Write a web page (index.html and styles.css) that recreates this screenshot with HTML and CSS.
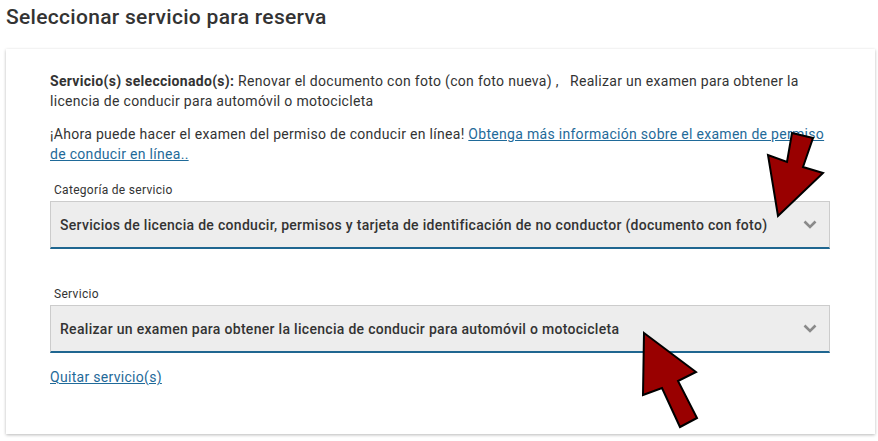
FILE: index.html
```html
<!DOCTYPE html>
<html lang="es">
<head>
    <meta charset="UTF-8">
    <meta name="viewport" content="width=device-width, initial-scale=1.0">
    <title>Seleccionar servicio para reserva</title>
    <link rel="stylesheet" href="styles.css">
</head>
<body>
    <div class="page">
        <h1 class="page-title">Seleccionar servicio para reserva</h1>

        <div class="card">
            <p class="selected">
                <strong>Servicio(s) seleccionado(s):</strong> Renovar el documento con foto (con foto nueva) ,&nbsp;&nbsp; Realizar un examen para obtener la licencia de conducir para automóvil o motocicleta
            </p>
            <p class="notice">
                ¡Ahora puede hacer el examen del permiso de conducir en línea! <a href="#">Obtenga más información sobre el examen de permiso de conducir en línea..</a>
            </p>

            <div class="field">
                <label class="field-label">Categoría de servicio</label>
                <div class="select">
                    <span>Servicios de licencia de conducir, permisos y tarjeta de identificación de no conductor (documento con foto)</span>
                    <svg class="chevron" width="14" height="9" viewBox="0 0 14 9"><path d="M1.5 1.5 L7 7 L12.5 1.5" fill="none" stroke="#8a8a8a" stroke-width="2.6"/></svg>
                </div>
            </div>

            <div class="field second">
                <label class="field-label">Servicio</label>
                <div class="select">
                    <span>Realizar un examen para obtener la licencia de conducir para automóvil o motocicleta</span>
                    <svg class="chevron" width="14" height="9" viewBox="0 0 14 9"><path d="M1.5 1.5 L7 7 L12.5 1.5" fill="none" stroke="#8a8a8a" stroke-width="2.6"/></svg>
                </div>
            </div>

            <a class="remove" href="#">Quitar servicio(s)</a>
        </div>

        <!-- annotation arrows drawn over the screenshot -->
        <svg class="arrows" width="878" height="441" viewBox="0 0 878 441">
            <polygon points="792,133 813,138 803,167 823,173 778,216 768,155 787,162" />
            <polygon points="644,333 696,372 678,381 697,418 680,427 662,388 643,395" />
        </svg>
    </div>
</body>
</html>
```

FILE: styles.css
```css
:root {
    --text: #333333;
    --link: #1f6a99;
    --field-bg: #ededed;
    --field-border: #cccccc;
    --accent: #1f6690;
}

* {
    margin: 0;
    padding: 0;
    box-sizing: border-box;
}

body {
    background: #ffffff;
    color: var(--text);
    font-family: Roboto, "Liberation Sans", Arial, sans-serif;
    letter-spacing: 0.3px;
}

.page {
    position: relative;
    padding: 5px 3px 0 6px;
    width: 878px;
    height: 441px;
}

.page-title {
    font-size: 21px;
    font-weight: 500;
    line-height: 24px;
    margin-bottom: 20px;
}

.card {
    width: 869px;
    background: #fff;
    box-shadow: 0 1px 3px rgba(0, 0, 0, 0.28);
    padding: 22px 45px 47px 44px;
    font-size: 14px;
    line-height: 20px;
}

.card p {
    margin-bottom: 13px;
}

.card a {
    color: var(--link);
    text-decoration: underline;
}

.card strong {
    font-weight: 700;
}

.field {
    margin-top: 18px;
}

.field.second {
    margin-top: 37px;
}

.field-label {
    display: block;
    font-size: 12px;
    line-height: 16px;
    padding-left: 4px;
    margin-bottom: 3px;
}

.select {
    display: flex;
    align-items: center;
    justify-content: space-between;
    height: 48px;
    background: var(--field-bg);
    border: 1px solid var(--field-border);
    border-bottom: 2px solid var(--accent);
    padding: 0 12px 0 9px;
    font-weight: 500;
}

.chevron {
    flex-shrink: 0;
}

.card .remove {
    display: inline-block;
    margin-top: 14px;
}

.arrows {
    position: absolute;
    left: 0;
    top: 0;
    pointer-events: none;
}

.arrows polygon {
    fill: #990000;
    stroke: #000;
    stroke-width: 2;
    stroke-linejoin: miter;
}
```
